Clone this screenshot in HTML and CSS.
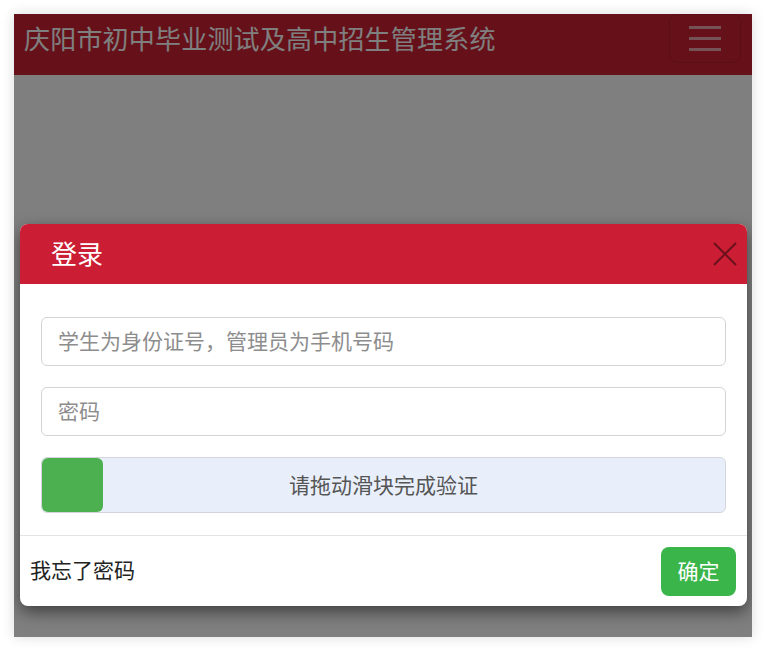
FILE: index.html
```html
<!DOCTYPE html>
<html lang="zh-CN">
<head>
  <meta charset="UTF-8">
  <title>庆阳市初中毕业测试及高中招生管理系统</title>
  <link rel="stylesheet" href="styles.css">
</head>
<body>

  <div class="app">
    <!-- Top bar -->
    <div class="navbar">
      <div class="brand">庆阳市初中毕业测试及高中招生管理系统</div>
      <button class="toggler" type="button">
        <span></span><span></span><span></span>
      </button>
    </div>

    <!-- Login modal -->
    <div class="backdrop">
      <div class="modal">
        <div class="modal-header">
          <h2>登录</h2>
          <span class="close">
            <svg width="24" height="24" viewBox="0 0 24 24"><path d="M1 1L23 23M23 1L1 23" stroke="currentColor" stroke-width="2" fill="none"/></svg>
          </span>
        </div>
        <div class="modal-body">
          <input class="field" type="text" placeholder="学生为身份证号，管理员为手机号码">
          <input class="field" type="password" placeholder="密码">
          <div class="slider">
            <div class="handle"></div>
            <div class="slider-text">请拖动滑块完成验证</div>
          </div>
        </div>
        <div class="modal-footer">
          <a class="forgot">我忘了密码</a>
          <button class="btn-ok" type="button">确定</button>
        </div>
      </div>
    </div>
  </div>

</body>
</html>
```

FILE: styles.css
```css
body {
  margin: 0;
  padding: 14px;
  background-color: #fff;
  font-family: "Noto Sans CJK SC", "Liberation Sans", sans-serif;
}

.app {
  position: relative;
  width: 738px;
  height: 623px;
  background-color: #fff;
  box-shadow: 0 0 12px rgba(0, 0, 0, 0.15);
  overflow: hidden;
}

.navbar {
  display: flex;
  justify-content: space-between;
  align-items: flex-start;
  height: 61px;
  padding: 0 11px 0 10px;
  background-color: #cc2033;
}

.brand {
  color: #fff;
  font-size: 26px;
  line-height: 48px;
  letter-spacing: 0.2px;
}

.toggler {
  display: flex;
  flex-direction: column;
  justify-content: center;
  gap: 8px;
  width: 72px;
  height: 49px;
  padding: 0 19px;
  background: transparent;
  border: 1px solid rgba(0, 0, 0, 0.1);
  border-radius: 8px;
}

.toggler span {
  display: block;
  height: 3px;
  background-color: rgba(255, 255, 255, 0.6);
}

.backdrop {
  position: absolute;
  top: 0;
  left: 0;
  right: 0;
  bottom: 0;
  padding: 210px 5px 0 6px;
  background-color: rgba(0, 0, 0, 0.5);
}

.modal {
  background-color: #fff;
  border-radius: 8px;
  box-shadow: 0 6px 16px rgba(0, 0, 0, 0.5);
  overflow: hidden;
}

.modal-header {
  display: flex;
  justify-content: space-between;
  align-items: center;
  height: 60px;
  padding: 0 10px 0 31px;
  background-color: #cb1d33;
}

.modal-header h2 {
  margin: 0 0 4px 0;
  color: #fff;
  font-size: 26px;
  font-weight: normal;
}

.close {
  display: flex;
  color: #6a111d;
}

.modal-body {
  display: flex;
  flex-direction: column;
  gap: 21px;
  padding: 33px 21px 22px 21px;
}

.field {
  height: 49px;
  padding: 0 16px 4px 16px;
  border: 1px solid #d4d4d4;
  border-radius: 6px;
  font-family: inherit;
  font-size: 21px;
  color: #333;
  box-sizing: border-box;
  width: 100%;
}

.field::placeholder {
  color: #8d8d8d;
}

.slider {
  position: relative;
  display: flex;
  align-items: center;
  justify-content: center;
  height: 56px;
  background-color: #e8effb;
  border: 1px solid #d2d6dc;
  border-radius: 6px;
  box-sizing: border-box;
}

.handle {
  position: absolute;
  top: 0;
  left: 0;
  bottom: 0;
  width: 61px;
  background-color: #4caf50;
  border-radius: 6px;
}

.slider-text {
  font-size: 21px;
  color: #555;
  margin-bottom: 2px;
}

.modal-footer {
  display: flex;
  justify-content: space-between;
  align-items: center;
  padding: 11px 11px 10px 10px;
  border-top: 1px solid #e3e3e3;
}

.forgot {
  font-size: 21px;
  color: #222;
  margin-bottom: 5px;
}

.btn-ok {
  width: 75px;
  height: 49px;
  padding-bottom: 4px;
  background-color: #3ab54a;
  border: none;
  border-radius: 8px;
  color: #fff;
  font-family: inherit;
  font-size: 21px;
}
```
